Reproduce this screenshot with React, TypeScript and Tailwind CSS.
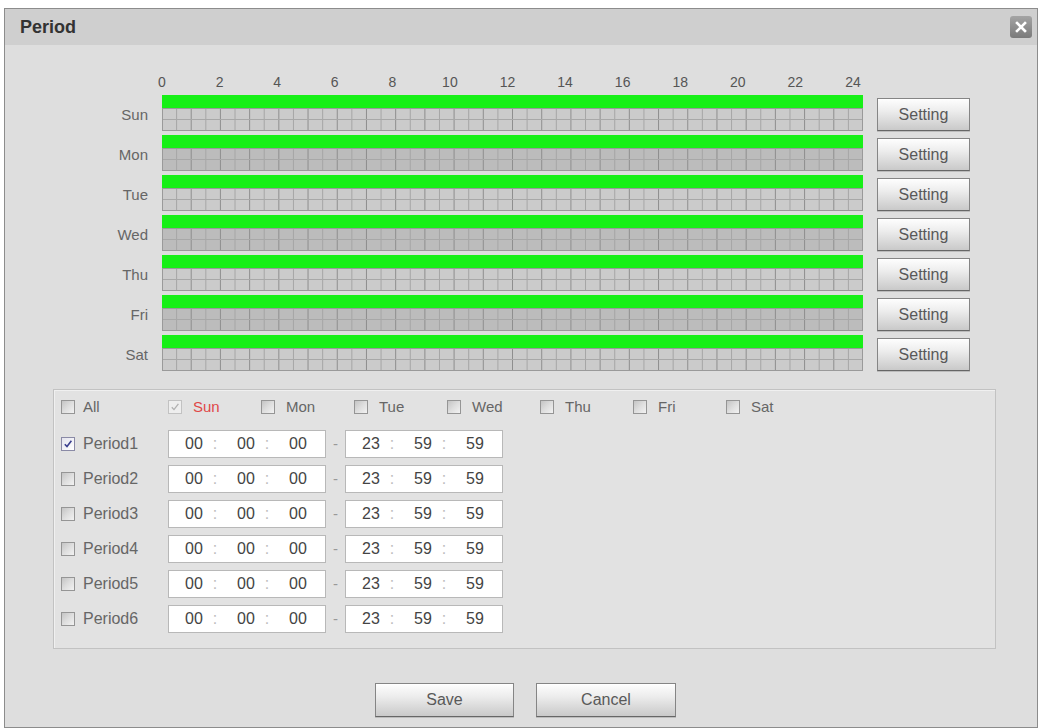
import React from "react";

const DAYS = ["Sun", "Mon", "Tue", "Wed", "Thu", "Fri", "Sat"];
const HOURS = [0, 2, 4, 6, 8, 10, 12, 14, 16, 18, 20, 22, 24];
const PERIODS = [1, 2, 3, 4, 5, 6];

const font = { fontFamily: '"Liberation Sans", Arial, sans-serif' };

// one day of the 24h timeline: half-hour cells, two sub rows
function DayGrid({ dark }: { dark: boolean }) {
  const w = 701;
  const cell = w / 48;
  return (
    <svg width={w} height={23} className="block">
      <rect x={0} y={0} width={w} height={23} fill={dark ? "#bcbcbc" : "#cbcbcb"} />
      {Array.from({ length: 47 }, (_, i) => (
        <line
          key={i}
          x1={(i + 1) * cell}
          x2={(i + 1) * cell}
          y1={0}
          y2={23}
          stroke={(i + 1) % 2 === 0 ? "#8e8e8e" : "#a6a6a6"}
          strokeWidth={1}
        />
      ))}
      <line x1={0} x2={w} y1={11.5} y2={11.5} stroke="#a8a8a8" strokeWidth={1} />
      <rect x={0.5} y={0.5} width={w - 1} height={22} fill="none" stroke="#9a9a9a" />
    </svg>
  );
}

function GrayButton({ label, className }: { label: string; className: string }) {
  return (
    <button
      className={
        "flex items-center justify-center border border-[#858585] border-b-[#666666] bg-[linear-gradient(to_bottom,#fefefe,#ececec_40%,#c9c9c9)] text-[16px] text-[#595959] shadow-[inset_0_1px_0_#ffffff,0_1px_0_#bcbcbc] " +
        className
      }
    >
      {label}
    </button>
  );
}

type BoxKind = "empty" | "disabled" | "checked";

function CheckBox({ kind }: { kind: BoxKind }) {
  if (kind === "checked") {
    return (
      <span className="flex h-[14px] w-[14px] items-center justify-center border border-[#8a8aa6] bg-[linear-gradient(135deg,#e4e4ee,#ffffff)]">
        <svg width="10" height="10" viewBox="0 0 10 10">
          <path d="M1.8 5.2 L4 7.6 L8.4 1.8" fill="none" stroke="#3b3f8f" strokeWidth="1.6" />
        </svg>
      </span>
    );
  }
  if (kind === "disabled") {
    return (
      <span className="flex h-[14px] w-[14px] items-center justify-center border border-[#c2c2c2] bg-[#eeeeee]">
        <svg width="10" height="10" viewBox="0 0 10 10">
          <path d="M1.8 5.2 L4 7.6 L8.4 1.8" fill="none" stroke="#b0b0b0" strokeWidth="1.3" />
        </svg>
      </span>
    );
  }
  return (
    <span className="block h-[14px] w-[14px] border border-[#959595] bg-[linear-gradient(135deg,#c4c4c4,#dedede_50%,#f2f2f2)]" />
  );
}

function TimeBox({ a, b, c }: { a: string; b: string; c: string }) {
  return (
    <div className="flex h-[28px] w-[158px] items-center border border-[#b8b8b8] bg-white pl-[11px] text-[16px] text-[#444]">
      <span className="w-[28px] text-center">{a}</span>
      <span className="mr-[10px] w-[14px] text-center text-[#bdbdbd]">:</span>
      <span className="w-[28px] text-center">{b}</span>
      <span className="mr-[10px] w-[14px] text-center text-[#bdbdbd]">:</span>
      <span className="w-[28px] text-center">{c}</span>
    </div>
  );
}

export default function App() {
  return (
    <div className="h-[728px] w-[1042px] overflow-hidden bg-white pl-[4px] pt-[8px]" style={font}>
      <div className="flex h-[720px] w-[1034px] flex-col border border-[#8c8c8c] bg-[#dedede]">
        {/* title bar */}
        <div className="flex h-[36px] items-center justify-between bg-[#cfcfcf] pl-[15px] pr-[5px]">
          <span className="text-[18px] font-bold text-[#333]">Period</span>
          <span className="flex h-[22px] w-[22px] items-center justify-center rounded-[3px] bg-[linear-gradient(to_bottom,#a4a4a4,#7a7a7a)]">
            <svg width="12" height="12" viewBox="0 0 12 12">
              <path d="M2 2 L10 10 M10 2 L2 10" stroke="#ffffff" strokeWidth="2.6" strokeLinecap="square" />
            </svg>
          </span>
        </div>

        {/* timeline */}
        <div className="pt-[27px]">
          <div className="flex h-[20px] items-center">
            <div className="w-[157px] shrink-0" />
            <div className="flex w-[691px] justify-between text-[14px] text-[#555]">
              {HOURS.map((h) => (
                <span key={h} className="flex w-0 justify-center">
                  {h}
                </span>
              ))}
            </div>
          </div>

          <div className="mt-[3px] flex flex-col">
            {DAYS.map((d, i) => (
              <div key={d} className="flex h-[40px]">
                <div className="w-[143px] shrink-0 pt-[11px] text-right text-[15px] leading-[18px] text-[#666]">
                  {d}
                </div>
                <div className="ml-[14px] flex w-[701px] flex-col">
                  <div className="h-[13px] bg-[#17f017]" />
                  <DayGrid dark={i % 2 === 1} />
                </div>
                <GrayButton label="Setting" className="ml-[14px] mt-[3px] h-[33px] w-[93px]" />
              </div>
            ))}
          </div>
        </div>

        {/* day / period config */}
        <div className="ml-[48px] mt-[14px] h-[260px] w-[943px] border border-[#c2c2c2] bg-[#e2e2e2] pl-[7px] pt-[3px] shadow-[inset_1px_1px_0_#f0f0f0]">
          <div className="flex h-[28px] items-center text-[15px] text-[#666]">
            <div className="flex w-[107px] items-center gap-[8px]">
              <CheckBox kind="empty" />
              <span>All</span>
            </div>
            {DAYS.map((d) => (
              <div key={d} className="flex w-[93px] items-center gap-[11px]">
                <CheckBox kind={d === "Sun" ? "disabled" : "empty"} />
                <span className={d === "Sun" ? "text-[#e04848]" : ""}>{d}</span>
              </div>
            ))}
          </div>

          <div className="mt-[9px] flex flex-col gap-[7px]">
            {PERIODS.map((p) => (
              <div key={p} className="flex h-[28px] items-center">
                <div className="flex w-[107px] items-center gap-[8px] text-[16px] text-[#666]">
                  <CheckBox kind={p === 1 ? "checked" : "empty"} />
                  <span>Period{p}</span>
                </div>
                <TimeBox a="00" b="00" c="00" />
                <span className="w-[19px] text-center text-[15px] text-[#999]">-</span>
                <TimeBox a="23" b="59" c="59" />
              </div>
            ))}
          </div>
        </div>

        {/* footer */}
        <div className="mt-[34px] flex justify-center gap-[22px] pl-[9px]">
          <GrayButton label="Save" className="h-[34px] w-[139px]" />
          <GrayButton label="Cancel" className="h-[34px] w-[140px]" />
        </div>
      </div>
    </div>
  );
}
